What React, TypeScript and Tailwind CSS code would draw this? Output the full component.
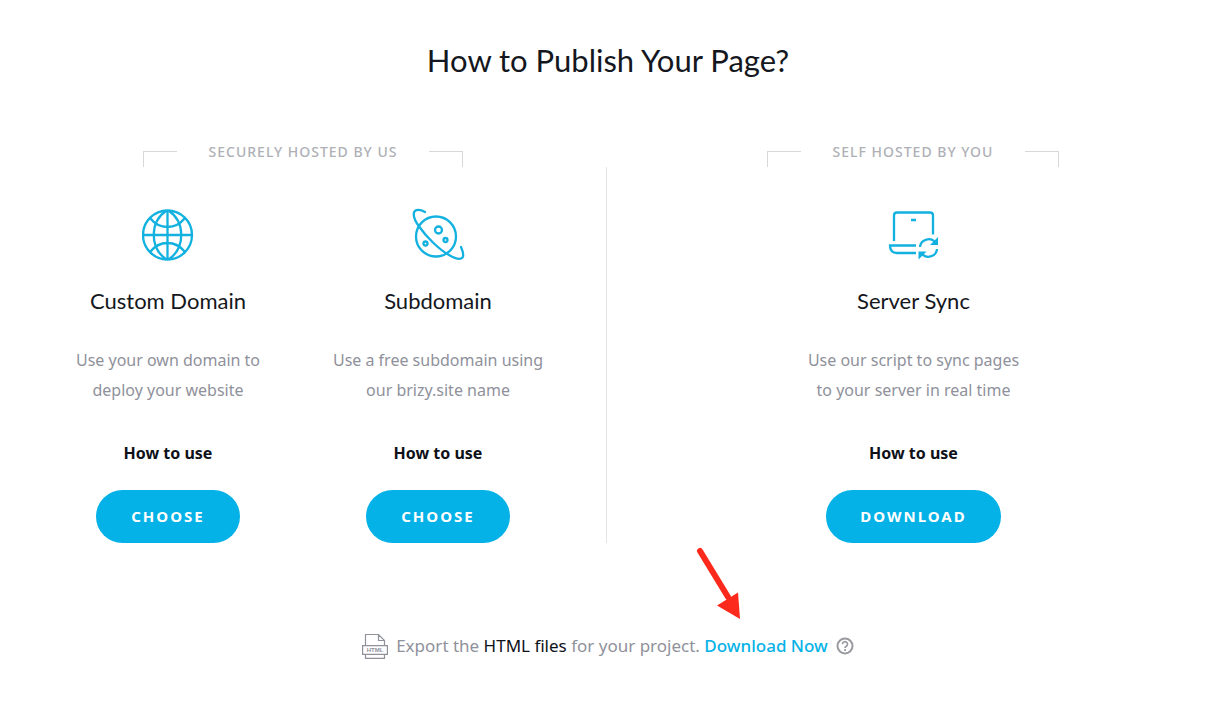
import type { ReactNode } from "react";

function GlobeIcon() {
  return (
    <svg width="52" height="52" viewBox="0 0 52 52" fill="none" stroke="currentColor" strokeWidth="2.3" aria-hidden="true">
      <circle cx="25.500" cy="26" r="24.500" />
      <path d="M25.500 1v50M1 26h50" />
      <path d="M24.500 1.500C7.500 13 7.500 39 24.500 50.500M26.500 1.500C43.500 13 43.500 39 26.500 50.500" />
      <path d="M8 9c9.500 12 25.500 12 35 0M8 43c9.500-12 25.500-12 35 0" />
    </svg>
  );
}

function PlanetIcon() {
  return (
    <svg width="52" height="52" viewBox="0 0 52 52" fill="none" stroke="currentColor" strokeWidth="2.3" strokeLinecap="round" className="overflow-visible" aria-hidden="true">
      <circle cx="24" cy="27.500" r="20" />
      <circle cx="26.500" cy="21" r="3.500" />
      <circle cx="13.500" cy="34.500" r="2" />
      <circle cx="33.500" cy="31" r="2" />
      <path d="M13 3C8 0 3 0 2 3.500c-1 4 2 10 5.500 14.500C14 27.500 27 40.500 37 46c6 3.500 11 5.500 13.500 2.500 1.500-2 .5-6-1.500-10.500" />
    </svg>
  );
}

function ServerSyncIcon() {
  return (
    <svg width="52" height="52" viewBox="0 0 52 52" fill="none" stroke="currentColor" strokeWidth="2.3" aria-hidden="true">
      <path d="M6 32V6.500q0-3 3-3h33q3 0 3 3v19M23 11h5" />
      <path d="M28 44H9q-7 0-7-7.500h26" />
      <path d="M32 38a8.500 8.500 0 0 1 15.500-4M49 40a8.500 8.500 0 0 1-15.500 4" />
      <path d="M50 28v8h-8zM30.500 50.500v-8h8z" fill="currentColor" stroke="none" />
    </svg>
  );
}

function HtmlFileIcon() {
  return (
    <svg width="26" height="26" viewBox="0 0 26 26" fill="none" stroke="currentColor" strokeWidth="1.2" aria-hidden="true">
      <path d="M3.500 12.500V1.500h13l6 6v5M16.500 1.500v6h6M.6 12.600h24.800v8.800H.6zM3.500 22v3.400h19V22" />
      <text x="13" y="19.200" textAnchor="middle" fill="currentColor" stroke="none" className="font-['Liberation_Sans'] text-[6px] font-bold">
        HTML
      </text>
    </svg>
  );
}

function RedArrow() {
  return (
    <svg
      className="absolute bottom-full left-1/2 mb-3.5 -translate-x-[70px]"
      width="46"
      height="74"
      viewBox="0 0 46 74"
      fill="#fb2a1c"
      aria-hidden="true"
    >
      <path d="M4 5L32 51" stroke="#fb2a1c" strokeWidth="6" strokeLinecap="round" />
      <path d="M44 73L21 59.500 42 46.500z" />
    </svg>
  );
}

function GroupLabel({ children }: { children: ReactNode }) {
  return (
    <div className="flex items-start justify-center gap-8">
      <span className="mt-[7px] h-4 w-[34px] border-t border-l border-[#d5d7da]" />
      <h2 className="text-sm leading-4 font-medium tracking-[1px] text-[#aeb0b6] uppercase">
        {children}
      </h2>
      <span className="mt-[7px] h-4 w-[34px] border-t border-r border-[#d5d7da]" />
    </div>
  );
}

type OptionProps = {
  icon: ReactNode;
  title: string;
  lines: [string, string];
  action: string;
};

function PublishOption({ icon, title, lines, action }: OptionProps) {
  return (
    <article className="flex flex-col items-center pt-[42px] text-center">
      <div className="text-[#12b1e0]">{icon}</div>
      <h3 className="mt-6 font-[Lato,sans-serif] text-[22px] leading-8 text-[#141720]">{title}</h3>
      <p className="mt-7 text-base leading-[30px] whitespace-nowrap text-[#8f919b]">
        {lines[0]}
        <br />
        {lines[1]}
      </p>
      <a href="#" className="mt-9 text-base leading-6 font-bold text-[#0e1118]">
        How to use
      </a>
      <button
        type="button"
        className="mt-[25px] h-[53px] min-w-36 cursor-pointer rounded-full bg-[#05b2e7] px-[34px] text-[15px] font-bold tracking-[2px] text-white uppercase"
      >
        {action}
      </button>
    </article>
  );
}

export default function App() {
  return (
    <main className="min-h-screen bg-white pt-10 pb-16 font-['Noto_Sans',sans-serif]">
      <h1 className="pl-1 text-center font-[Lato,sans-serif] text-[31px] leading-10 text-[#141720]">
        How to Publish Your Page?
      </h1>

      <div className="mt-16 grid grid-cols-2">
        <GroupLabel>Securely hosted by us</GroupLabel>
        <div className="pl-2">
          <GroupLabel>Self hosted by you</GroupLabel>
        </div>
      </div>

      <div className="grid grid-cols-2">
        <div className="flex justify-center">
          <div className="grid w-[540px] grid-cols-2">
            <PublishOption
              icon={<GlobeIcon />}
              title="Custom Domain"
              lines={["Use your own domain to", "deploy your website"]}
              action="Choose"
            />
            <PublishOption
              icon={<PlanetIcon />}
              title="Subdomain"
              lines={["Use a free subdomain using", "our brizy.site name"]}
              action="Choose"
            />
          </div>
        </div>
        <div className="border-l border-[#e3e5e8] pl-2">
          <PublishOption
            icon={<ServerSyncIcon />}
            title="Server Sync"
            lines={["Use our script to sync pages", "to your server in real time"]}
            action="Download"
          />
        </div>
      </div>

      <div className="mt-[90px] flex items-center justify-center pl-1 text-[17px] leading-6 text-[#8f919b]">
        <HtmlFileIcon />
        <p className="ml-2">
          Export the <span className="text-[#0e1118]">HTML files</span> for your project.{" "}
          <span className="relative inline-block">
            <a href="#" className="font-medium text-[#05b2e7]">
              Download Now
            </a>
            <RedArrow />
          </span>
        </p>
        <button type="button" aria-label="Help" className="ml-2 cursor-pointer text-[#999ba0]">
          <svg width="18" height="18" viewBox="0 0 18 18" fill="none" stroke="currentColor" strokeWidth="2" aria-hidden="true">
            <circle cx="9" cy="9" r="7.500" />
            <path d="M6.500 7.200a2.500 2.500 0 1 1 3.800 2.100Q9 10 9 11M9 12v2" strokeWidth="1.700" />
          </svg>
        </button>
      </div>
    </main>
  );
}
